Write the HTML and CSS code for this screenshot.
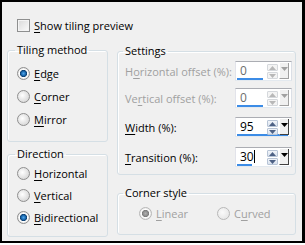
FILE: index.html
```html
<!DOCTYPE html>
<html lang="en">
<head>
    <meta charset="UTF-8">
    <title>Tiling settings</title>
    <link rel="stylesheet" href="styles.css">
</head>
<body>

    <div class="dialog">
        <label class="check-row">
            <span class="checkbox"></span>
            <span><u>S</u>how tiling preview</span>
        </label>

        <div class="columns">
            <div class="col-left">
                <fieldset class="group group-tiling">
                    <legend>Tiling method</legend>
                    <div class="radio-row"><span class="radio checked"></span><span><u>E</u>dge</span></div>
                    <div class="radio-row"><span class="radio"></span><span><u>C</u>orner</span></div>
                    <div class="radio-row"><span class="radio"></span><span><u>M</u>irror</span></div>
                </fieldset>

                <fieldset class="group group-direction">
                    <legend>Direction</legend>
                    <div class="radio-row"><span class="radio"></span><span><u>H</u>orizontal</span></div>
                    <div class="radio-row"><span class="radio"></span><span><u>V</u>ertical</span></div>
                    <div class="radio-row"><span class="radio checked"></span><span><u>B</u>idirectional</span></div>
                </fieldset>
            </div>

            <div class="col-right">
                <fieldset class="group group-settings">
                    <legend>Settings</legend>

                    <div class="field disabled">
                        <span class="field-label">H<u>o</u>rizontal offset (%):</span>
                        <span class="spin">
                            <span class="spin-main">
                                <span class="spin-value">0</span>
                                <span class="spin-bar" style="width: 26px"></span>
                            </span>
                            <span class="spin-arrows">
                                <span class="arrow-btn"><svg width="7" height="4" viewBox="0 0 7 4"><path d="M0 4 L3.5 0 L7 4 Z"/></svg></span>
                                <span class="arrow-btn"><svg width="7" height="4" viewBox="0 0 7 4"><path d="M0 0 L7 0 L3.5 4 Z"/></svg></span>
                            </span>
                            <span class="spin-drop"><svg width="7" height="4" viewBox="0 0 7 4"><path d="M0 0 L7 0 L3.5 4 Z"/></svg></span>
                        </span>
                    </div>

                    <div class="field field-vertical disabled">
                        <span class="field-label">Ve<u>r</u>tical offset (%):</span>
                        <span class="spin">
                            <span class="spin-main">
                                <span class="spin-value">0</span>
                                <span class="spin-bar" style="width: 26px"></span>
                            </span>
                            <span class="spin-arrows">
                                <span class="arrow-btn"><svg width="7" height="4" viewBox="0 0 7 4"><path d="M0 4 L3.5 0 L7 4 Z"/></svg></span>
                                <span class="arrow-btn"><svg width="7" height="4" viewBox="0 0 7 4"><path d="M0 0 L7 0 L3.5 4 Z"/></svg></span>
                            </span>
                            <span class="spin-drop"><svg width="7" height="4" viewBox="0 0 7 4"><path d="M0 0 L7 0 L3.5 4 Z"/></svg></span>
                        </span>
                    </div>

                    <div class="field field-width">
                        <span class="field-label"><u>W</u>idth (%):</span>
                        <span class="spin">
                            <span class="spin-main">
                                <span class="spin-value">95</span>
                                <span class="spin-bar" style="width: 51px"></span>
                            </span>
                            <span class="spin-arrows">
                                <span class="arrow-btn"><svg width="7" height="4" viewBox="0 0 7 4"><path d="M0 4 L3.5 0 L7 4 Z"/></svg></span>
                                <span class="arrow-btn"><svg width="7" height="4" viewBox="0 0 7 4"><path d="M0 0 L7 0 L3.5 4 Z"/></svg></span>
                            </span>
                            <span class="spin-drop"><svg width="7" height="4" viewBox="0 0 7 4"><path d="M0 0 L7 0 L3.5 4 Z"/></svg></span>
                        </span>
                    </div>

                    <div class="field field-transition">
                        <span class="field-label"><u>T</u>ransition (%):</span>
                        <span class="spin">
                            <span class="spin-main">
                                <span class="spin-value">30<span class="caret"></span></span>
                                <span class="spin-bar" style="width: 15px"></span>
                            </span>
                            <span class="spin-arrows">
                                <span class="arrow-btn"><svg width="7" height="4" viewBox="0 0 7 4"><path d="M0 4 L3.5 0 L7 4 Z"/></svg></span>
                                <span class="arrow-btn"><svg width="7" height="4" viewBox="0 0 7 4"><path d="M0 0 L7 0 L3.5 4 Z"/></svg></span>
                            </span>
                            <span class="spin-drop"><svg width="7" height="4" viewBox="0 0 7 4"><path d="M0 0 L7 0 L3.5 4 Z"/></svg></span>
                        </span>
                    </div>
                </fieldset>

                <fieldset class="group group-corner">
                    <legend>Corner style</legend>
                    <div class="corner-options disabled">
                        <div class="radio-row corner-option"><span class="radio checked"></span><span><u>L</u>inear</span></div>
                        <div class="radio-row corner-option"><span class="radio"></span><span>C<u>u</u>rved</span></div>
                    </div>
                </fieldset>
            </div>
        </div>
    </div>

</body>
</html>
```

FILE: styles.css
```css
body {
    margin: 0;
    background-color: #ffffff;
    font-family: "Open Sans", "Noto Sans", sans-serif;
    font-size: 11px;
    color: #000000;
}

.dialog {
    width: 305px;
    height: 243px;
    box-sizing: border-box;
    border: 2px solid #000000;
    border-right-width: 3px;
    background-color: #f0f0f0;
    padding: 17px 6px 0 5px;
}

u {
    text-decoration-thickness: 1px;
    text-underline-offset: 2px;
}

/* checkbox row */
.check-row {
    display: flex;
    align-items: center;
    gap: 4px;
    height: 13px;
    padding-left: 10px;
    line-height: 13px;
}

.checkbox {
    width: 13px;
    height: 13px;
    box-sizing: border-box;
    border: 1px solid #8e8f8f;
    background: linear-gradient(135deg, #d9d9d9, #fbfbfb);
    box-shadow: inset 0 0 0 1px #f4f4f4;
}

/* layout */
.columns {
    display: grid;
    grid-template-columns: 101px 179px;
    column-gap: 9px;
    margin-top: 11px;
}

/* group boxes */
.group {
    margin: 0;
    border: 1px solid #d5dfe5;
    border-radius: 3px;
    box-shadow: inset 1px 1px 0 #ffffff;
    min-width: 0;
}

/* legend offset is measured from the fieldset's padding edge */
.group legend {
    padding: 0 2px;
    margin-left: -2px;
    line-height: 14px;
}

.group-settings legend {
    margin-left: -2px;
}

.group-corner legend {
    margin-left: -16px;
}

.group-tiling {
    padding: 5px 0 10px 9px;
}

.group-direction {
    margin-top: 5px;
    padding: 1px 0 8px 9px;
}

.group-direction .radio-row {
    height: 22px;
}

.group-settings {
    margin-top: 1px;
    padding: 3px 3px 7px 7px;
}

.group-corner {
    margin-top: 11px;
    padding: 3px 0 11px 21px;
}

/* radios */
.radio-row {
    display: flex;
    align-items: center;
    gap: 4px;
    height: 23px;
}

.radio {
    width: 13px;
    height: 13px;
    box-sizing: border-box;
    border-radius: 50%;
    border: 1px solid #8f8f8f;
    background: radial-gradient(circle at 40% 40%, #ffffff, #d6d6d6 80%);
    flex-shrink: 0;
}

.radio.checked {
    background: radial-gradient(circle at 50% 50%, #52a7e8 0, #1d6db5 2px, #0d3e6e 3.3px, #ffffff 3.9px, #f2f2f2 4.8px, #d6d6d6 6px);
}

/* settings fields */
.field {
    display: flex;
    justify-content: space-between;
    align-items: center;
    height: 20px;
}

.field-vertical {
    margin-top: 7px;
}

.field-width {
    margin-top: 9px;
}

.field-transition {
    margin-top: 10px;
}

.disabled {
    color: #a0a0a0;
}

.spin {
    display: flex;
    width: 57px;
    height: 20px;
    box-sizing: border-box;
    border: 1px solid #abadb3;
    border-color: #abadb3 #dbdfe6 #e3e9ef #e2e3ea;
    background-color: #ffffff;
    padding: 1px 2px 0 1px;
}

.spin-main {
    flex: 1;
    display: flex;
    flex-direction: column;
    justify-content: space-between;
    min-width: 0;
}

.spin-value {
    padding-left: 3px;
    font-size: 12px;
    line-height: 15px;
    color: #000000;
}

.disabled .spin-value {
    color: #6d6d6d;
}

.caret {
    display: inline-block;
    width: 1px;
    height: 13px;
    background-color: #000000;
    vertical-align: -2px;
}

.spin-bar {
    display: block;
    height: 2px;
    background-color: #3c8ce6;
}

.spin-arrows {
    display: flex;
    flex-direction: column;
    gap: 1px;
    width: 11px;
    margin: 1px 1px 1px 0;
}

.arrow-btn {
    flex: 1;
    display: flex;
    align-items: center;
    justify-content: center;
    border: 1px solid #b7c4d6;
    border-radius: 1px;
    background: linear-gradient(#f2f5fa, #d9e2ee);
    fill: #4d6185;
}

.disabled .arrow-btn {
    border-color: #d5d8dc;
    background: #f4f4f4;
    fill: #b8b8b8;
}

.spin-drop {
    display: flex;
    justify-content: center;
    align-items: flex-start;
    width: 10px;
    margin-bottom: 1px;
    padding-top: 4px;
    box-sizing: border-box;
    background-color: #f0f0f0;
    border-left: 1px solid #ffffff;
    border-right: 1px solid #404040;
    border-bottom: 1px solid #404040;
    fill: #000000;
}

.disabled .spin-drop {
    border-right-color: #a0a0a0;
    border-bottom-color: #a0a0a0;
    fill: #a0a0a0;
}

/* corner style */
.corner-options {
    display: flex;
}

.corner-option {
    width: 81px;
    height: 20px;
}

.corner-options .radio {
    border-color: #b8b8b8;
    background: radial-gradient(circle at 40% 40%, #fafafa, #e6e6e6 80%);
}

.corner-options .radio.checked {
    background: radial-gradient(circle at 50% 50%, #b0b0b0 0, #8c8c8c 2.5px, #7a7a7a 3.3px, #ffffff 3.9px, #f2f2f2 4.8px, #dedede 6px);
}
```
